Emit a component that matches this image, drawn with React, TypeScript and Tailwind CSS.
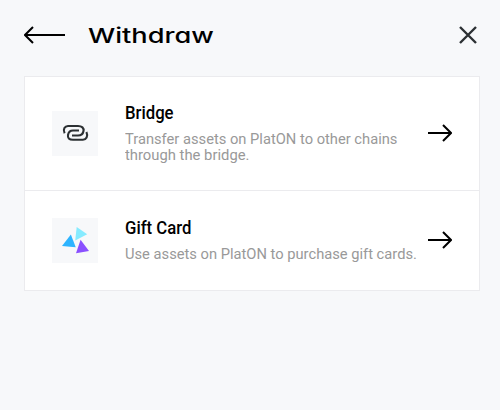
import type { ReactNode } from "react";

function ArrowRight() {
  return (
    <svg className="-mt-0.5 h-[18px] w-6 shrink-0" viewBox="0 0 24 18" fill="none" stroke="#000" strokeWidth="2">
      <path d="M0 9H23M15 1L23 9L15 17" />
    </svg>
  );
}

function BridgeIcon() {
  return (
    <svg className="h-[45px] w-[46px]" viewBox="0 0 46 45" fill="none" stroke="#2c3033" strokeWidth="2.1">
      <path d="M12.600 22.300C10.500 18 13 15 16 15H26C30 15 32 17 31.500 20C31 23 29 24.500 26 24.500H20" />
      <path d="M34.400 21C36.500 25.500 34 28.800 31 28.800H21C17 28.800 15.500 27 16 24C16.500 21 18 19.500 21 19.500H27" />
    </svg>
  );
}

function GiftIcon() {
  return (
    <svg className="h-[45px] w-[46px]" viewBox="0 0 46 45">
      <path d="M24.700 9L35.200 16.200L23.200 22.500Z" fill="#86ebff" />
      <path d="M18.900 16.500L23.700 29.300L10 28Z" fill="#2db4ff" />
      <path d="M28.600 21.800L37 33L24 35.300Z" fill="#8a50ff" />
    </svg>
  );
}

function Row({ icon, title, children, className }: { icon: ReactNode; title: ReactNode; children: ReactNode; className: string }) {
  return (
    <div className={`flex items-center pl-[27px] pr-[27px] ${className}`}>
      <div className="h-[45px] w-[46px] shrink-0 bg-[#f7f8fa]">{icon}</div>
      <div className="ml-[27px] w-[303px] shrink-0 whitespace-nowrap">
        <h2 className="-mt-0.5 h-[22px] text-[17.500px] font-medium leading-[22px] text-black">{title}</h2>
        <div className="mt-[7.500px] text-[15.500px] leading-4 text-[#999]">{children}</div>
      </div>
      <ArrowRight />
    </div>
  );
}

export default function App() {
  return (
    <main className="h-[410px] w-[500px] overflow-hidden bg-[#f7f8fa] font-[Roboto,sans-serif]">
      <header className="flex h-[76px] items-start pl-6 pr-[23px] pt-[26px]">
        <svg className="h-[18px] w-[41px] shrink-0" viewBox="0 0 41 18" fill="none" stroke="#000" strokeWidth="2">
          <path d="M41 9H1M9 1L1 9L9 17" />
        </svg>
        <h1 className="-mt-px ml-[23px] origin-left scale-x-[1.325] whitespace-nowrap font-[Inter,sans-serif] text-[20.500px] font-medium leading-[22px] text-black [font-feature-settings:'cv11']">Withdraw</h1>
        <svg className="ml-auto h-[18px] w-[18px] shrink-0" viewBox="0 0 18 18" fill="none" stroke="#2c3033" strokeWidth="2.4">
          <path d="M1 1L17 17M17 1L1 17" />
        </svg>
      </header>
      <section className="ml-6 w-[456px] border border-[#ebebee] bg-white">
        <Row className="h-[114px] border-b border-[#ebebee]" icon={<BridgeIcon />} title={<span className="inline-block origin-left scale-x-[0.955]">Bridge</span>}>
          <p className="w-max origin-left scale-x-[0.948]">Transfer assets on PlatON to other chains</p>
          <p className="w-max origin-left scale-x-[0.955]">through the bridge.</p>
        </Row>
        <Row className="h-[99px]" icon={<GiftIcon />} title={<span className="inline-block origin-left scale-x-[0.955]">Gift Card</span>}>
          <p className="w-max origin-left scale-x-[0.948]">Use assets on PlatON to purchase gift cards.</p>
        </Row>
      </section>
    </main>
  );
}
